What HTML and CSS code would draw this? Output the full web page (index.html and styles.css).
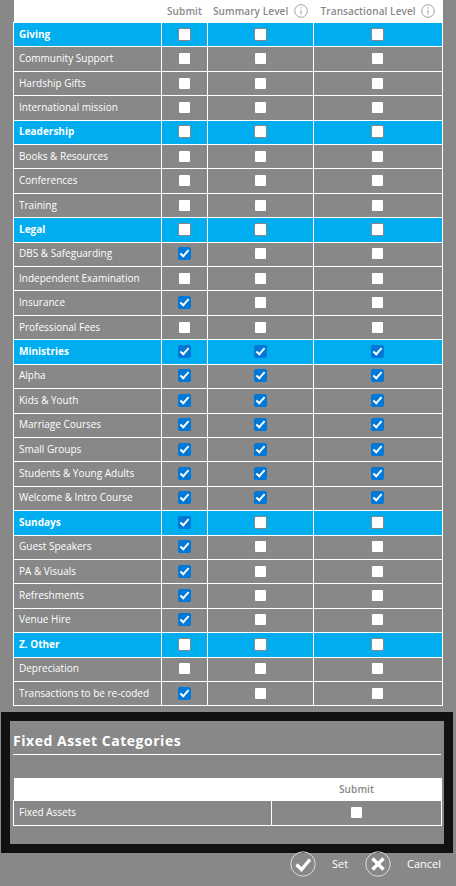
FILE: index.html
```html
<!DOCTYPE html>
<html>
<head>
<title>Budget Categories</title>
<link rel="stylesheet" href="styles.css">
</head>
<body>

<table class="cats">
<thead>
<tr>
<th class="c-name"></th>
<th class="c-sub">Submit</th>
<th class="c-sum">Summary Level <svg class="info" viewBox="0 0 14 14"><circle cx="7" cy="7" r="6.3"/><path d="M7 6v4.5M7 3.3v1.4"/></svg></th>
<th class="c-tra">Transactional Level <svg class="info" viewBox="0 0 14 14"><circle cx="7" cy="7" r="6.3"/><path d="M7 6v4.5M7 3.3v1.4"/></svg></th>
</tr>
</thead>
<tbody>
<tr class="group"><td>Giving</td><td><input type="checkbox"></td><td><input type="checkbox"></td><td><input type="checkbox"></td></tr>
<tr><td>Community Support</td><td><input type="checkbox"></td><td><input type="checkbox"></td><td><input type="checkbox"></td></tr>
<tr><td>Hardship Gifts</td><td><input type="checkbox"></td><td><input type="checkbox"></td><td><input type="checkbox"></td></tr>
<tr><td>International mission</td><td><input type="checkbox"></td><td><input type="checkbox"></td><td><input type="checkbox"></td></tr>
<tr class="group"><td>Leadership</td><td><input type="checkbox"></td><td><input type="checkbox"></td><td><input type="checkbox"></td></tr>
<tr><td>Books &amp; Resources</td><td><input type="checkbox"></td><td><input type="checkbox"></td><td><input type="checkbox"></td></tr>
<tr><td>Conferences</td><td><input type="checkbox"></td><td><input type="checkbox"></td><td><input type="checkbox"></td></tr>
<tr><td>Training</td><td><input type="checkbox"></td><td><input type="checkbox"></td><td><input type="checkbox"></td></tr>
<tr class="group"><td>Legal</td><td><input type="checkbox"></td><td><input type="checkbox"></td><td><input type="checkbox"></td></tr>
<tr><td>DBS &amp; Safeguarding</td><td><input type="checkbox" checked></td><td><input type="checkbox"></td><td><input type="checkbox"></td></tr>
<tr><td>Independent Examination</td><td><input type="checkbox"></td><td><input type="checkbox"></td><td><input type="checkbox"></td></tr>
<tr><td>Insurance</td><td><input type="checkbox" checked></td><td><input type="checkbox"></td><td><input type="checkbox"></td></tr>
<tr><td>Professional Fees</td><td><input type="checkbox"></td><td><input type="checkbox"></td><td><input type="checkbox"></td></tr>
<tr class="group"><td>Ministries</td><td><input type="checkbox" checked></td><td><input type="checkbox" checked></td><td><input type="checkbox" checked></td></tr>
<tr><td>Alpha</td><td><input type="checkbox" checked></td><td><input type="checkbox" checked></td><td><input type="checkbox" checked></td></tr>
<tr><td>Kids &amp; Youth</td><td><input type="checkbox" checked></td><td><input type="checkbox" checked></td><td><input type="checkbox" checked></td></tr>
<tr><td>Marriage Courses</td><td><input type="checkbox" checked></td><td><input type="checkbox" checked></td><td><input type="checkbox" checked></td></tr>
<tr><td>Small Groups</td><td><input type="checkbox" checked></td><td><input type="checkbox" checked></td><td><input type="checkbox" checked></td></tr>
<tr><td>Students &amp; Young Adults</td><td><input type="checkbox" checked></td><td><input type="checkbox" checked></td><td><input type="checkbox" checked></td></tr>
<tr><td>Welcome &amp; Intro Course</td><td><input type="checkbox" checked></td><td><input type="checkbox" checked></td><td><input type="checkbox" checked></td></tr>
<tr class="group"><td>Sundays</td><td><input type="checkbox" checked></td><td><input type="checkbox"></td><td><input type="checkbox"></td></tr>
<tr><td>Guest Speakers</td><td><input type="checkbox" checked></td><td><input type="checkbox"></td><td><input type="checkbox"></td></tr>
<tr><td>PA &amp; Visuals</td><td><input type="checkbox" checked></td><td><input type="checkbox"></td><td><input type="checkbox"></td></tr>
<tr><td>Refreshments</td><td><input type="checkbox" checked></td><td><input type="checkbox"></td><td><input type="checkbox"></td></tr>
<tr><td>Venue Hire</td><td><input type="checkbox" checked></td><td><input type="checkbox"></td><td><input type="checkbox"></td></tr>
<tr class="group"><td>Z. Other</td><td><input type="checkbox"></td><td><input type="checkbox"></td><td><input type="checkbox"></td></tr>
<tr><td>Depreciation</td><td><input type="checkbox"></td><td><input type="checkbox"></td><td><input type="checkbox"></td></tr>
<tr><td>Transactions to be re-coded</td><td><input type="checkbox" checked></td><td><input type="checkbox"></td><td><input type="checkbox"></td></tr>
</tbody>
</table>

<div class="fixed">
<h2>Fixed Asset Categories</h2>
<table class="assets">
<thead>
<tr><th class="a-name"></th><th>Submit</th></tr>
</thead>
<tbody>
<tr><td>Fixed Assets</td><td><input type="checkbox"></td></tr>
</tbody>
</table>
</div>

<div class="actions">
<svg class="round" viewBox="0 0 26 26"><circle cx="13" cy="13" r="12.2"/><path class="mark" d="M6.5 13.5l5 5 8.5-10"/></svg>
<span class="lbl-set">Set</span>
<svg class="round" viewBox="0 0 26 26"><circle cx="13" cy="13" r="12.2"/><path class="mark" d="M7.5 7.5l11 11M18.5 7.5l-11 11"/></svg>
<span class="lbl-cancel">Cancel</span>
</div>

</body>
</html>
```

FILE: styles.css
```css
html, body {
margin: 0;
padding: 0;
background: #888888;
}

body {
width: 456px;
height: 886px;
overflow: hidden;
font-family: "Open Sans", sans-serif;
font-size: 10px;
color: #fff;
}

table {
border-collapse: collapse;
table-layout: fixed;
}

input[type=checkbox] {
appearance: none;
-webkit-appearance: none;
position: relative;
display: block;
box-sizing: border-box;
width: 13px;
height: 13px;
margin: -1px auto 0;
background: #fff;
border: 1px solid #888888;
border-radius: 2px;
}

input[type=checkbox]:checked {
background: #0078d7;
border-color: #0078d7;
}

input[type=checkbox]:checked::after {
content: "";
position: absolute;
left: 3px;
top: 0;
width: 3px;
height: 7px;
border-right: 2px solid #fff;
border-bottom: 2px solid #fff;
transform: rotate(42deg);
}

.cats {
width: 429px;
margin-left: 13px;
}

.cats .c-name { width: 148px; }
.cats .c-sub { width: 46px; }
.cats .c-sum { width: 106px; }
.cats .c-tra { width: 129px; }

.cats th, .assets th {
background: #fff;
color: #888888;
font-weight: 600;
font-size: 10px;
letter-spacing: 0.1px;
height: 22px;
padding: 0;
text-align: center;
white-space: nowrap;
}

.cats td, .assets td {
border: 1px solid #fff;
height: 23.41px;
padding: 0;
}

.cats td:first-child, .assets td:first-child {
padding: 0 0 2px 5px;
box-sizing: border-box;
}

.cats td:last-child input {
left: -0.5px;
}

.group td {
background: #00aeef;
}

.group td:first-child {
font-weight: 700;
}

.info {
width: 14px;
height: 14px;
vertical-align: -3px;
margin-left: 3px;
fill: none;
stroke: #a0a0a0;
stroke-width: 1;
}

.fixed {
box-sizing: border-box;
width: 452px;
height: 141px;
margin: 6px 0 0 1px;
border: 9px solid #111;
padding: 0 3px;
}

.fixed h2 {
margin: 0;
padding: 10px 0 4px;
height: 19px;
font-size: 14px;
line-height: 19px;
font-weight: 700;
letter-spacing: 0.53px;
border-bottom: 1px solid #fff;
}

.assets {
width: 429px;
margin-top: 23px;
}

.assets .a-name {
width: 258px;
}

.assets th {
height: 22px;
}

.actions {
display: flex;
align-items: center;
height: 26px;
margin-top: -2px;
padding: 0 0 2px 290px;
font-size: 11px;
}

.round {
width: 26px;
height: 26px;
flex: none;
}

.round circle {
fill: none;
stroke: #ddd;
stroke-width: 1;
}

.round .mark {
fill: none;
stroke: #fff;
stroke-width: 3.4;
}

.lbl-set {
margin: -2px 0 0 16px;
width: 33px;
}

.lbl-cancel {
margin: -2px 0 0 16px;
}
```
